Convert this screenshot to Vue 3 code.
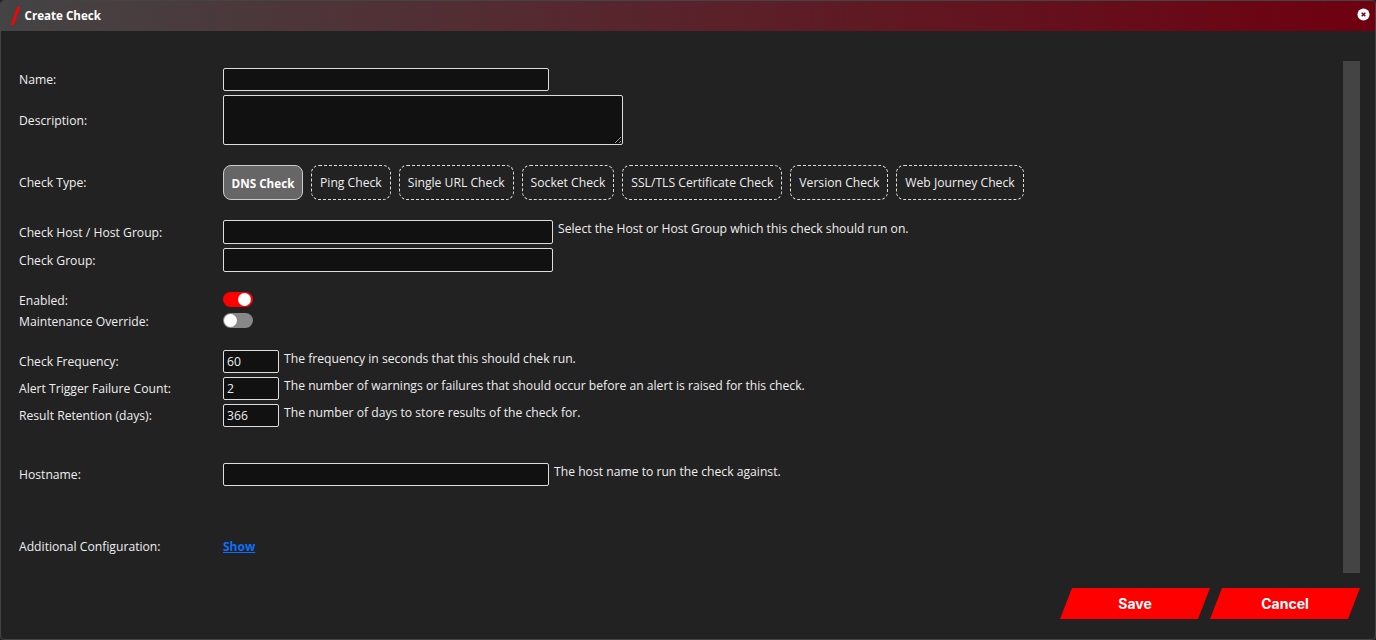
<template>
  <div class="dialog">
    <header class="titlebar">
      <span class="slash"></span>
      <span class="title">Create Check</span>
      <button class="close" aria-label="Close">
        <svg viewBox="0 0 14 14" width="13" height="13">
          <circle cx="7" cy="7" r="6.5" fill="#fff" />
          <path d="M5 5 9 9M9 5 5 9" stroke="#6f0010" stroke-width="1.5" fill="none" />
        </svg>
      </button>
    </header>

    <div class="body">
      <div class="content">
        <form class="form" @submit.prevent>
          <div class="row r-name">
            <label>Name:</label>
            <input class="field w326" type="text" />
          </div>
          <div class="row r-desc">
            <label>Description:</label>
            <textarea class="field area"></textarea>
          </div>

          <div class="row r-type">
            <label>Check Type:</label>
            <div class="types">
              <button
                v-for="t in types"
                :key="t"
                type="button"
                class="type"
                :class="{ active: t === active }"
                @click="active = t"
              >{{ t }}</button>
            </div>
          </div>

          <div class="row r-host">
            <label>Check Host / Host Group:</label>
            <input class="field w330" type="text" />
            <span class="hint">Select the Host or Host Group which this check should run on.</span>
          </div>
          <div class="row r-group">
            <label>Check Group:</label>
            <input class="field w330" type="text" />
          </div>

          <div class="row r-enabled">
            <label>Enabled:</label>
            <button type="button" class="toggle" :class="{ on: enabled }" @click="enabled = !enabled"><i></i></button>
          </div>
          <div class="row r-maint">
            <label>Maintenance Override:</label>
            <button type="button" class="toggle" :class="{ on: maint }" @click="maint = !maint"><i></i></button>
          </div>

          <div v-for="n in numbers" :key="n.label" class="row r-num">
            <label>{{ n.label }}</label>
            <input class="field w56" type="text" :value="n.value" />
            <span class="hint">{{ n.hint }}</span>
          </div>

          <div class="row r-hostname">
            <label>Hostname:</label>
            <input class="field w326" type="text" />
            <span class="hint">The host name to run the check against.</span>
          </div>

          <div class="row r-additional">
            <label>Additional Configuration:</label>
            <a href="#" class="show" @click.prevent>Show</a>
          </div>
        </form>
        <div class="scrollbar"></div>
      </div>

      <footer class="actions">
        <button class="action">Save</button>
        <button class="action">Cancel</button>
      </footer>
    </div>
  </div>
</template>

<script setup>
import { ref } from 'vue'

const types = [
  'DNS Check',
  'Ping Check',
  'Single URL Check',
  'Socket Check',
  'SSL/TLS Certificate Check',
  'Version Check',
  'Web Journey Check'
]
const active = ref('DNS Check')
const enabled = ref(true)
const maint = ref(false)
const numbers = [
  { label: 'Check Frequency:', value: '60', hint: 'The frequency in seconds that this should chek run.' },
  { label: 'Alert Trigger Failure Count:', value: '2', hint: 'The number of warnings or failures that should occur before an alert is raised for this check.' },
  { label: 'Result Retention (days):', value: '366', hint: 'The number of days to store results of the check for.' }
]
</script>

<style>
html, body { margin: 0; background: #222; }
</style>

<style scoped>
* { box-sizing: border-box; }
.dialog {
  width: 1376px;
  height: 640px;
  display: flex;
  flex-direction: column;
  background: #222;
  border: 1px solid #444;
  border-radius: 4px;
  overflow: hidden;
  font-family: "Open Sans", "Noto Sans", sans-serif;
  font-size: 12.17px;
  color: #f2f2f2;
}
.titlebar {
  height: 30px;
  flex: none;
  display: flex;
  align-items: center;
  padding: 0 5px 0 13px;
  background: linear-gradient(90deg, #444 0%, #6f0010 100%);
}
.slash {
  width: 2.5px;
  height: 18px;
  background: #f00;
  transform: skewX(-20deg);
  margin-right: 8px;
}
.title { font-weight: 700; font-size: 11.6px; color: #fff; margin-top: -1px; }
.close {
  margin-left: auto;
  padding: 0;
  border: 0;
  background: none;
  display: flex;
  margin-top: -3px;
}
.body {
  flex: 1;
  display: flex;
  flex-direction: column;
  min-height: 0;
}
.content {
  height: 542px;
  padding-top: 30px;
  display: flex;
  flex: none;
}
.form {
  flex: none;
  width: 1342px;
  padding: 7px 0 0 18px;
}
.scrollbar {
  width: 17px;
  height: 512px;
  background: #444;
}
.row {
  display: flex;
  align-items: flex-start;
}
.row label {
  flex: none;
  width: 204px;
  line-height: 17px;
  color: #eee;
}
.hint { margin-left: 5px; line-height: 17px; color: #eee; }
.field {
  display: block;
  flex: none;
  background: #111;
  border: 1px solid #ddd;
  border-radius: 2px;
  color: #eee;
  font: inherit;
  padding: 0 3px;
  outline: none;
}
.w326 { width: 326px; height: 23px; }
.w330 { width: 330px; height: 24px; }
.w56 { width: 56px; height: 23px; }
.area { width: 400px; height: 50px; resize: both; }

.r-name label { padding-top: 3px; }
.r-name { margin-bottom: 4px; }
.r-desc { align-items: center; margin-bottom: 20px; }
.r-type { align-items: center; margin-bottom: 20px; }
.types { display: flex; gap: 8px; }
.type {
  height: 35px;
  padding: 0 8px;
  background: transparent;
  color: #eee;
  border: 1px dashed #ddd;
  border-radius: 8px;
  font: inherit;
}
.type.active {
  width: 80px;
  padding: 0;
  background: #666;
  border: 1px solid #ccc;
  color: #fff;
  font-weight: 700;
  font-size: 11.7px;
}
.r-host { margin-bottom: 4px; }
.r-host label, .r-group label { padding-top: 4px; }
.r-group { margin-bottom: 20px; }
.r-enabled, .r-maint { align-items: center; height: 15px; }
.r-enabled label, .r-maint label { padding-top: 2px; }
.r-enabled { margin-bottom: 6px; }
.r-maint { margin-bottom: 22px; }
.toggle {
  position: relative;
  width: 30px;
  height: 15px;
  padding: 0;
  border: 0;
  border-radius: 8px;
  background: #888;
}
.toggle.on { background: #f00; }
.toggle i {
  position: absolute;
  top: 1px;
  left: 1px;
  width: 13px;
  height: 13px;
  border-radius: 50%;
  background: #fff;
}
.toggle.on i { left: 15px; }
.r-num { margin-bottom: 4px; }
.r-num label { padding-top: 3px; }
.r-hostname { margin-top: 36px; margin-bottom: 52px; }
.r-hostname label { padding-top: 3px; }
.r-additional { align-items: center; }
.show { color: #0d6efd; font-weight: 700; font-size: 12px; text-decoration: underline; }
.actions {
  display: flex;
  justify-content: flex-end;
  padding: 15px 15px 0 0;
}
.action {
  width: 150px;
  height: 31px;
  border: 0;
  padding: 0;
  background: #f00;
  color: #fff;
  font-family: Inter, sans-serif;
  font-weight: 700;
  font-size: 14px;
  clip-path: polygon(12px 0, 100% 0, calc(100% - 12px) 100%, 0 100%);
}
</style>
